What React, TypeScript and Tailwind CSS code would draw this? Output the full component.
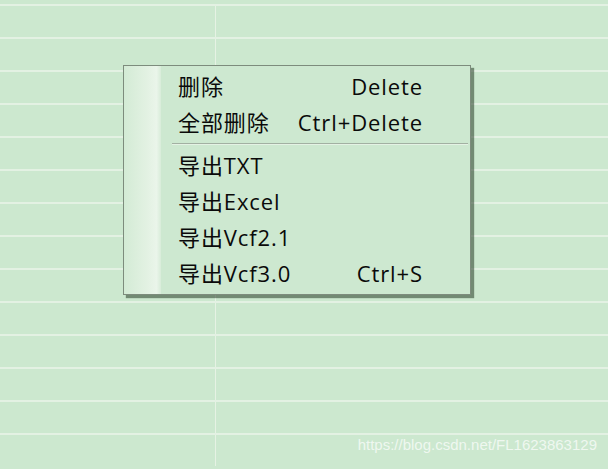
const rows = Array.from({ length: 14 })

const items: { label: string; keys?: string }[][] = [
  [
    { label: "删除", keys: "Delete" },
    { label: "全部删除", keys: "Ctrl+Delete" },
  ],
  [
    { label: "导出TXT" },
    { label: "导出Excel" },
    { label: "导出Vcf2.1" },
    { label: "导出Vcf3.0", keys: "Ctrl+S" },
  ],
]

function MenuRow({ label, keys }: { label: string; keys?: string }) {
  return (
    <div className="flex h-[36px] items-center justify-between pl-[54px] pr-[47px]">
      <span>{label}</span>
      {keys && <span>{keys}</span>}
    </div>
  )
}

export default function App() {
  return (
    <div
      className="relative h-[469px] w-[608px] overflow-hidden bg-[#cce8cf]"
      style={{ fontFamily: '"Open Sans", "Noto Sans CJK SC", sans-serif' }}
    >
      {/* sheet grid */}
      <div className="flex flex-col pt-[4px]">
        {rows.map((_, i) => (
          <div key={i} className="flex h-[33px] border-t-2 border-[#e3f1e3]">
            <div className="w-[216px] border-r border-[#e6f2e4]" />
            <div className="flex-1" />
          </div>
        ))}
      </div>

      {/* context menu */}
      <div className="absolute left-[123px] top-[65px] flex w-[348px] border border-[#7d8c7d] bg-[#cde8d0] text-[22px] leading-none tracking-[0.9px] text-[#0a0a0a] shadow-[3px_3px_1px_rgba(40,60,40,0.55)]">
        <div className="w-[37px] shrink-0 bg-[linear-gradient(to_right,#d3ebd5_0%,#e2f1e2_60%,#eaf5ea_88%,#d8ecd9_100%)]" />
        <div className="-ml-[37px] flex flex-1 flex-col pb-[3px] pt-[2px]">
          {items[0].map((it) => (
            <MenuRow key={it.label} {...it} />
          ))}
          <div className="flex h-[7px] items-center pl-[48px] pr-[2px]">
            <div className="h-[2px] flex-1 border-t border-b border-t-[#a2b0a2] border-b-[#e4f2e4]" />
          </div>
          {items[1].map((it) => (
            <MenuRow key={it.label} {...it} />
          ))}
        </div>
      </div>

      {/* watermark */}
      <div
        className="absolute bottom-[13px] right-[11px] text-[15px] text-white/70"
        style={{ fontFamily: '"Liberation Sans", Arial, sans-serif' }}
      >
        https://blog.csdn.net/FL1623863129
      </div>
    </div>
  )
}
